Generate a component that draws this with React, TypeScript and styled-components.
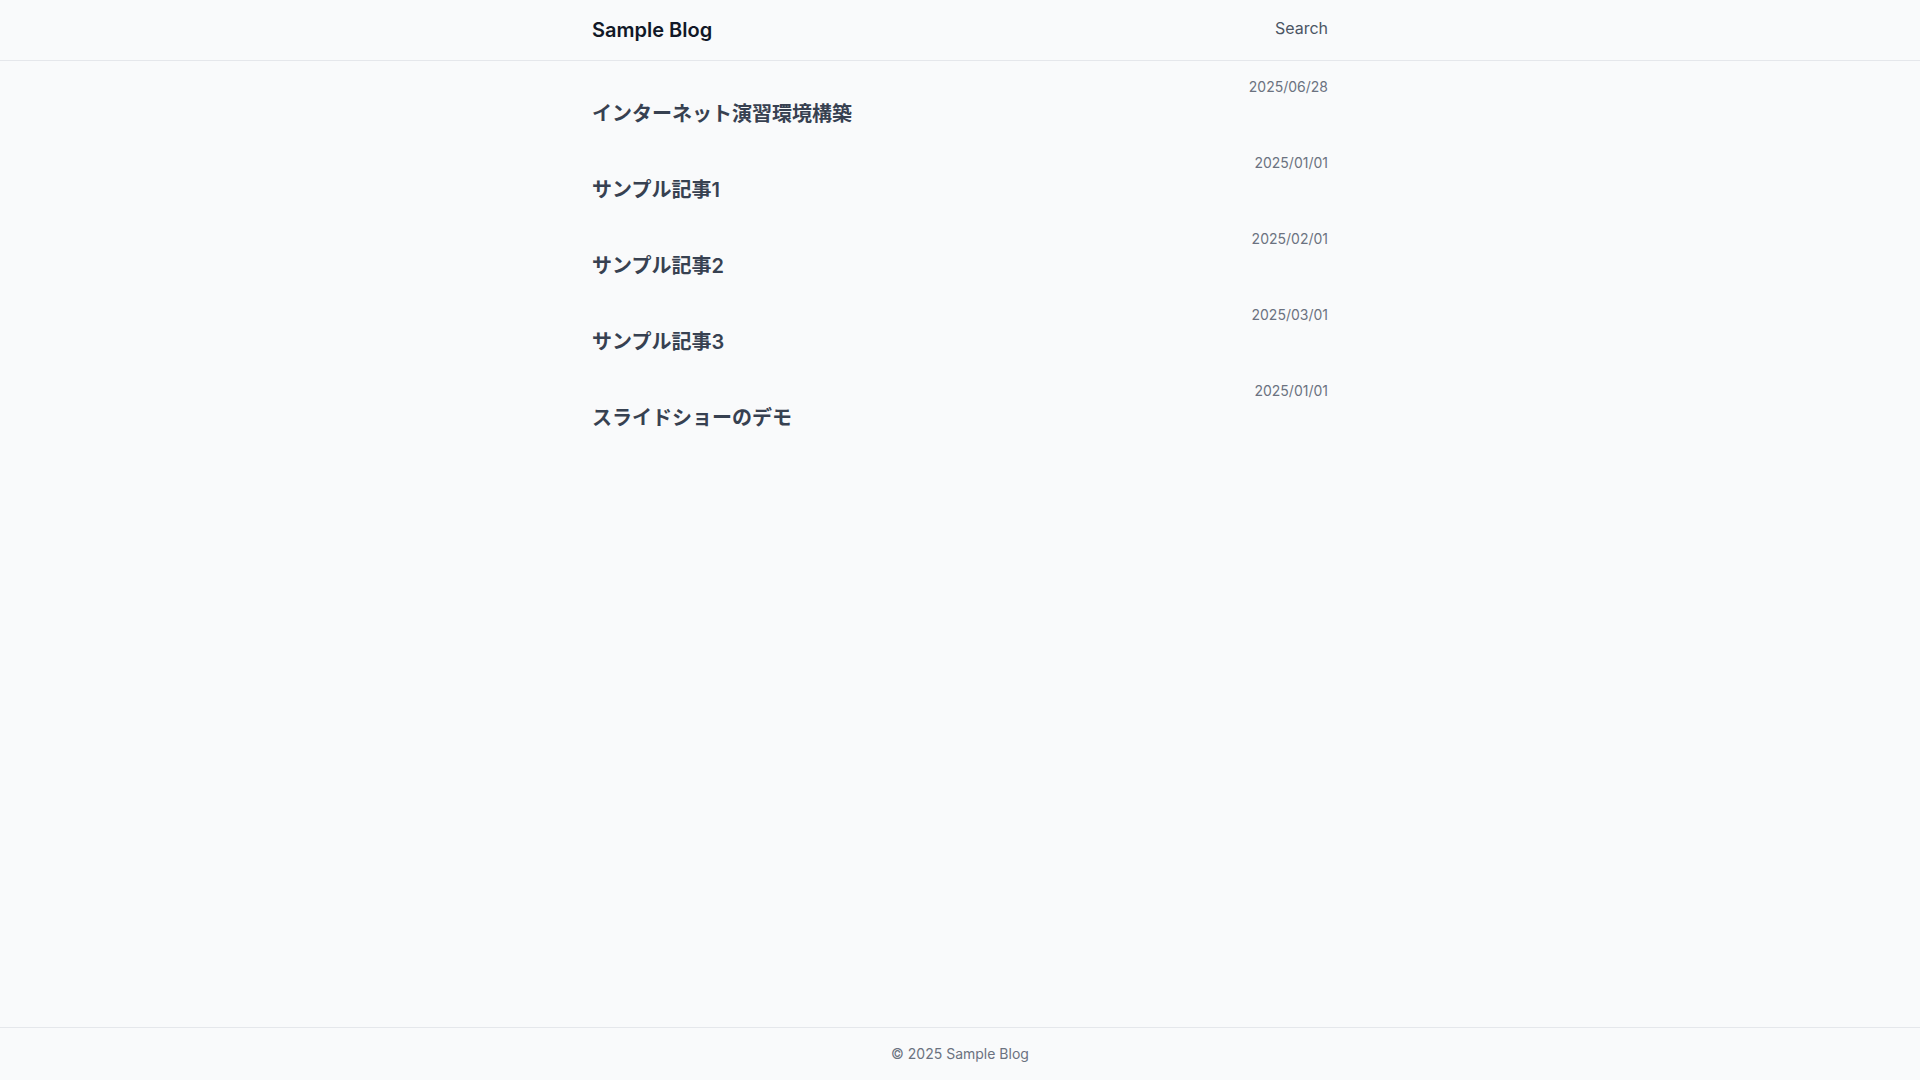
import React from 'react'
import styled, { createGlobalStyle } from 'styled-components'

const GlobalStyle = createGlobalStyle`
  html, body {
    margin: 0;
    padding: 0;
    background: #f9fafb;
    font-family: Inter, "Noto Sans CJK JP", sans-serif;
    color: #111827;
  }
  * {
    box-sizing: border-box;
  }
`

type Post = {
  title: string
  date: string
}

const posts: Post[] = [
  { title: 'インターネット演習環境構築', date: '2025/06/28' },
  { title: 'サンプル記事1', date: '2025/01/01' },
  { title: 'サンプル記事2', date: '2025/02/01' },
  { title: 'サンプル記事3', date: '2025/03/01' },
  { title: 'スライドショーのデモ', date: '2025/01/01' }
]

export default function App() {
  return (
    <>
      <GlobalStyle />
      <S.Page>
        <S.Header>
          <S.Container>
            <S.HeaderRow>
              <S.Logo href='#'>Sample Blog</S.Logo>
              <S.NavLink href='#'>Search</S.NavLink>
            </S.HeaderRow>
          </S.Container>
        </S.Header>
        <S.Main>
          <S.Container>
            <S.List>
              {posts.map((post, i) => (
                <S.Item key={i}>
                  <S.Date>{post.date}</S.Date>
                  <S.Title href='#'>{post.title}</S.Title>
                </S.Item>
              ))}
            </S.List>
          </S.Container>
        </S.Main>
        <S.Footer>© 2025 Sample Blog</S.Footer>
      </S.Page>
    </>
  )
}

export const S = {
  Page: styled.div`
    min-height: 100vh;
    display: flex;
    flex-direction: column;
  `,
  Header: styled.header`
    border-bottom: 1px solid #e5e7eb;
    background: #f9fafb;
  `,
  Container: styled.div`
    max-width: 768px;
    margin: 0 auto;
    padding: 0 16px;
  `,
  HeaderRow: styled.div`
    display: flex;
    align-items: center;
    justify-content: space-between;
    padding: 16px 0;
  `,
  Logo: styled.a`
    font-size: 20px;
    line-height: 28px;
    font-weight: 600;
    color: #111827;
    text-decoration: none;
  `,
  NavLink: styled.a`
    font-size: 16px;
    line-height: 24px;
    color: #4b5563;
    text-decoration: none;
    margin-top: -4px;
  `,
  Main: styled.main`
    flex: 1;
    padding-top: 16px;
  `,
  List: styled.ul`
    list-style: none;
    margin: 0;
    padding: 0;
    display: flex;
    flex-direction: column;
    gap: 25px;
  `,
  Item: styled.li`
    display: flex;
    flex-direction: column;
  `,
  Date: styled.time`
    align-self: flex-end;
    font-size: 14px;
    line-height: 20px;
    color: #6b7280;
  `,
  Title: styled.a`
    margin-top: 3px;
    font-size: 20px;
    line-height: 28px;
    font-weight: 600;
    color: #374151;
    text-decoration: none;
  `,
  Footer: styled.footer`
    border-top: 1px solid #e5e7eb;
    padding: 16px 0;
    text-align: center;
    font-size: 14px;
    line-height: 20px;
    color: #6b7280;
  `
}
